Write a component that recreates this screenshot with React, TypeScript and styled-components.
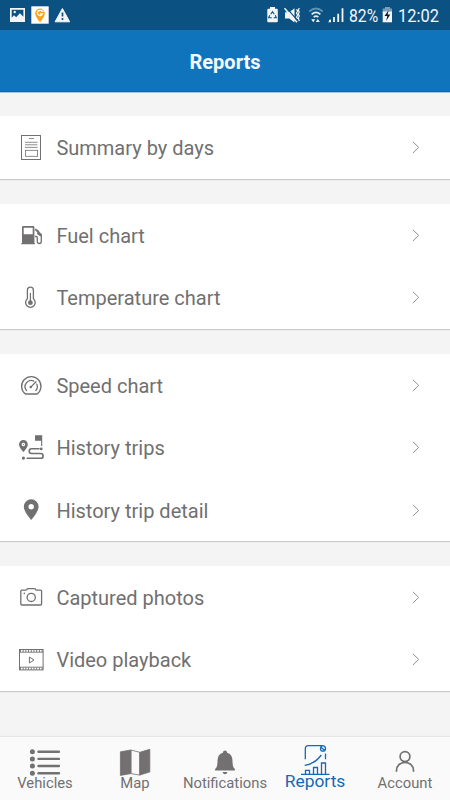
import React from "react";
import styled, { createGlobalStyle } from "styled-components";

const GlobalStyle = createGlobalStyle`
  * { box-sizing: border-box; }
  body { margin: 0; background: #f3f3f3; font-family: Roboto, "Noto Sans", sans-serif; }
`;

const Screen = styled.div`
  display: flex;
  flex-direction: column;
  width: 450px;
  height: 800px;
  background: #f4f4f4;
  overflow: hidden;
`;

const StatusBar = styled.div`
  display: flex;
  justify-content: space-between;
  flex: none;
  height: 30px;
  background: #0b5182;
`;

const StatusGroup = styled.div`
  display: flex;
  color: #f2f6fb;
`;

const StatusText = styled.span<{ $width: number; $scale: number }>`
  display: block;
  width: ${(p) => p.$width}px;
  font-size: 18.7px;
  line-height: 32px;
  white-space: nowrap;
  transform: scaleX(${(p) => p.$scale});
  transform-origin: left center;
`;

const Header = styled.header`
  display: flex;
  align-items: center;
  justify-content: center;
  flex: none;
  height: 63px;
  background: #1074bd;
  border-bottom: 1px solid #a9bedb;
  box-shadow: inset 0 -1px #0c68b3;
`;

const Title = styled.h1`
  margin: 0;
  padding-top: 2px;
  color: #f7faff;
  font-size: 20px;
  font-weight: 700;
  line-height: 24px;
`;

const Content = styled.main`
  display: flex;
  flex-direction: column;
  flex: 1;
  gap: 24px;
  padding-top: 23px;
`;

const Section = styled.section`
  background: #fff;
  border-bottom: 1px solid #cbcbcb;
  box-shadow: 0 1px #ececec;
`;

const Row = styled.div<{ $height: number }>`
  display: flex;
  align-items: flex-start;
  height: ${(p) => p.$height}px;
  padding: 15px 27px 0 15px;
`;

const RowIcon = styled.svg`
  flex: none;
  width: 32px;
  height: 32px;
  color: #727071;
`;

const RowLabel = styled.span`
  flex: 1;
  padding-left: 9.4px;
  color: #707070;
  font-size: 20px;
  line-height: 34px;
`;

const Chevron = styled.svg`
  flex: none;
  width: 12px;
  height: 32px;
`;

const TabBar = styled.nav`
  display: grid;
  grid-template-columns: repeat(5, 90px);
  flex: none;
  height: 63px;
  background: #fafafa;
  box-shadow: 0 -1px 1px #e6e6e6;
`;

const Tab = styled.div<{ $active?: boolean }>`
  display: flex;
  flex-direction: column;
  align-items: center;
  padding-top: 8px;
  color: ${(p) => (p.$active ? "#1469b8" : "#727071")};
`;

const TabIcon = styled.svg`
  flex: none;
  width: 32px;
  height: 31px;
`;

const TabLabel = styled.span<{ $active?: boolean }>`
  font-size: ${(p) => (p.$active ? 17.4 : 14.8)}px;
  line-height: ${(p) => (p.$active ? 11 : 14)}px;
  white-space: nowrap;
`;

const icons: Record<string, React.ReactNode> = {
  summary: (
    <g fill="none" stroke="currentColor">
      <rect x="6.5" y="4.5" width="19" height="24" />
      <path d="M14 7.5h5M10 11.3h12.5M10 13.8h12.5M10 16.4h12.5" strokeWidth="0.8" />
      <rect x="10.4" y="19.3" width="12.2" height="6" strokeWidth="0.8" />
    </g>
  ),
  fuel: (
    <g>
      <path
        fill="currentColor"
        fillRule="evenodd"
        d="M7 24V8.3Q7 7 8.3 7h9.8q1.3 0 1.3 1.3V24h.4v1.3H6.3V24ZM8.7 8.7v6.6h9V8.7Z"
      />
      <path d="m20.2 10.2 3 2.2v2.3l3 2" fill="none" stroke="currentColor" strokeWidth="2" />
      <path d="M20 17.5h1.3q1 0 1 1.2v4.1q0 1.7 1.9 1.7 2.1 0 2.1-2v-7l-4.6-4" fill="none" stroke="currentColor" strokeWidth="1.3" />
    </g>
  ),
  temperature: (
    <g fill="none" stroke="currentColor" strokeWidth="1.3">
      <path d="M12.4 17.8V9.2a3 3 0 0 1 6 0v8.6a4.8 4.8 0 1 1-6 0Z" />
      <path d="M15.4 12v8" strokeWidth="1.2" />
      <circle cx="15.4" cy="21.7" r="2.4" fill="currentColor" stroke="none" />
    </g>
  ),
  speed: (
    <g fill="none" stroke="currentColor" strokeWidth="1.3" strokeLinecap="round">
      <path d="M10.4 25h11.8a9.7 9.7 0 1 0-11.8 0Z" strokeLinejoin="round" />
      <path d="M11.6 21.6a6.1 6.1 0 0 1 7.2-9.5M21.8 15.2a6.1 6.1 0 0 1-1 6.4" />
      <path d="m16.3 17.6 4.7-4.8" />
      <circle cx="15.8" cy="18" r="1.3" fill="currentColor" stroke="none" />
    </g>
  ),
  trips: (
    <g>
      <path
        fill="currentColor"
        fillRule="evenodd"
        d="M8.4 21Q4 16.2 4 13.4a4.4 4.4 0 0 1 8.8 0Q12.8 16.2 8.4 21Zm0-9.3a1.8 1.8 0 1 0 0 3.6 1.8 1.8 0 0 0 0-3.6Z"
      />
      <circle cx="8.4" cy="13.5" r="0.6" fill="currentColor" />
      <path d="M20 4.3h7.2v10.8h-1.1V9.7H20Z" fill="currentColor" />
      <circle cx="26.2" cy="17.9" r="1.4" fill="currentColor" />
      <circle cx="8.4" cy="27.1" r="1.6" fill="currentColor" />
      <path d="M24 17.7h-7.4a2.4 2.4 0 0 0 0 4.8h9.1a2.4 2.4 0 0 1 0 4.8H12.2" fill="none" stroke="currentColor" strokeWidth="1.6" strokeLinecap="round" />
    </g>
  ),
  pin: (
    <path
      fill="currentColor"
      fillRule="evenodd"
      d="M16.2 26Q8.8 17.5 8.8 12.7a7.4 7.4 0 0 1 14.8 0Q23.6 17.5 16.2 26Zm0-16a2.7 2.7 0 1 0 0 5.4 2.7 2.7 0 0 0 0-5.4Z"
    />
  ),
  camera: (
    <g fill="none" stroke="currentColor" strokeWidth="1.3">
      <path d="M6.9 9.2h4q.8 0 1-.8.2-.8 1-.8h6.6q.8 0 1 .8.2.8 1 .8h4q1.1 0 1.1 1.1v12.6q0 1.1-1.1 1.1H6.9q-1.1 0-1.1-1.1V10.3q0-1.1 1.1-1.1Z" />
      <circle cx="16.2" cy="16.4" r="4.1" />
      <circle cx="9.3" cy="12.4" r="0.8" fill="currentColor" stroke="none" />
    </g>
  ),
  video: (
    <g fill="none" stroke="currentColor">
      <rect x="4.5" y="6.5" width="23.6" height="20.4" />
      <path d="M4.5 9.2h23.6M4.5 24.2h23.6" strokeWidth="0.9" />
      <path d="M5 7.8h23M5 25.6h23" strokeWidth="2.2" strokeDasharray="0.9 1.8" />
      <path d="m14.4 14 4.6 3-4.6 3Z" />
    </g>
  ),
};

const sections = [
  [{ icon: "summary", label: "Summary by days", height: 63 }],
  [
    { icon: "fuel", label: "Fuel chart", height: 62 },
    { icon: "temperature", label: "Temperature chart", height: 63 },
  ],
  [
    { icon: "speed", label: "Speed chart", height: 62 },
    { icon: "trips", label: "History trips", height: 63 },
    { icon: "pin", label: "History trip detail", height: 62 },
  ],
  [
    { icon: "camera", label: "Captured photos", height: 62 },
    { icon: "video", label: "Video playback", height: 63 },
  ],
];

const tabs: { label: string; active?: boolean; icon: React.ReactNode }[] = [
  {
    label: "Vehicles",
    icon: (
      <g fill="currentColor">
        {[6.7, 13.9, 21, 28.2].map((y) => (
          <g key={y}>
            <circle cx="3.4" cy={y} r="2.5" />
            <rect x="8.3" y={y - 1.2} width="22.8" height="2.4" rx="1.2" />
          </g>
        ))}
      </g>
    ),
  },
  {
    label: "Map",
    icon: (
      <g stroke="currentColor" strokeWidth="0.8" strokeLinejoin="round">
        <path d="M1.4 6.8 11.9 5v23.6L1.4 30.4ZM20.8 7.3l10-3v22.6l-10 3.2Z" fill="currentColor" />
        <path d="m11.9 5 8.9 2.3v22.8l-8.9-1.5Z" fill="none" />
      </g>
    ),
  },
  {
    label: "Notifications",
    icon: (
      <g fill="currentColor">
        <path d="M16 5.6q2 0 2.1 2.1 5.4 1.6 5.4 8.2 0 6.7 2.4 8v1.5H6.1v-1.5q2.4-1.3 2.4-8 0-6.6 5.4-8.2.1-2.1 2.1-2.1Z" />
        <path d="M13.6 27h4.8q-.5 2.3-2.4 2.3T13.6 27Z" />
      </g>
    ),
  },
  {
    label: "Reports",
    active: true,
    icon: (
      <g fill="none" stroke="currentColor" strokeWidth="1.3">
        <path d="M6.3 14.2V3.7q0-3 3-3h14q3.2 0 3.2 2.9 0 2.6-2.4 2.6-2.8 0-2.6-2.8 0-1.9 1.8-2.7M22 2.2l3.8 3.2M26.5 8.6v5.6" />
        <path d="M5.7 20.4q10-1.4 16.6-10.4" />
        <path d="M2 29.4h28.5M6.5 29v-3.7h4V29M14.5 29v-6.5h4V29M22.5 29V18h4v11" />
      </g>
    ),
  },
  {
    label: "Account",
    icon: (
      <g fill="none" stroke="currentColor" strokeWidth="1.7">
        <circle cx="16" cy="11.6" r="4.9" />
        <path d="M7.5 26.8v-1.4a8.5 8.1 0 0 1 17 0v1.4" />
      </g>
    ),
  },
];

const NoticeIcons = () => (
  <svg width="80" height="30" viewBox="0 0 80 30">
    <path fill="#f2f6fb" fillRule="evenodd" d="M10 8h15v14H10Zm1.7 1.7v8l2.3-2.5 2.2 2 3.7-4 3.5 3.6V9.7Z" />
    <circle cx="14.7" cy="12" r="1.2" fill="#f2f6fb" />
    <rect x="31" y="6" width="18" height="18" fill="#fff" stroke="#174690" strokeWidth="0.6" />
    <path d="M40 22.2q-4.8-5.3-4.8-8.9a4.8 4.8 0 0 1 9.6 0q0 3.6-4.8 8.9Z" fill="#f6a51c" />
    <path d="M42.3 11.6a2.6 2.6 0 1 0 .2 2.2H40" fill="none" stroke="#fff" strokeWidth="1.2" />
    <path d="M42.6 8.6v2.8h2.6" fill="none" stroke="#fff" strokeWidth="0.7" />
    <path d="m62.4 8.5 7.3 13.3H55.1Z" fill="#f2f6fb" stroke="#f2f6fb" strokeLinejoin="round" />
    <path d="M62.5 12.4v4.2M62.5 18.1v1.8" stroke="#0b5182" strokeWidth="1.7" />
  </svg>
);

const SignalIcons = () => (
  <svg width="86" height="30" viewBox="263 0 86 30">
    <path d="M270 7h5v1.7h1.8q1 0 1 1v11.6q0 1-1 1h-8.5q-1 0-1-1V9.7q0-1 1-1h1.7Z" fill="#f2f6fb" />
    <path d="m270.7 14.2 1.8-2.6 1.8 2.6M275.3 15.3l1 2.5h-2.7M271.8 17.8h-3.2l1.2-2.5" fill="none" stroke="#0b5182" strokeWidth="1.1" />
    <path d="M285 12.2h4.3l5.2-4v14.4l-5.2-4H285Z" fill="#f2f6fb" />
    <path d="m286 7.4 11 12.4" stroke="#0b5182" strokeWidth="1.2" />
    <path d="m284.5 8.2 12.5 14" stroke="#f2f6fb" strokeWidth="1.5" />
    <path d="m296.5 9.3 1.2 1.8-1.2 2 1.2 2-1.2 2 1.2 1.8M299.3 8l-1 2 1 2-1 2 1 2-1 2 1 3" fill="none" stroke="#f2f6fb" strokeWidth="1.2" />
    <path d="M309.3 11.5q6.7-6 13.4 0" fill="none" stroke="#5f91b5" strokeWidth="1.7" />
    <path d="M311.6 14.4q4.4-4 8.8 0M313.7 17.2q2.3-2 4.6 0" fill="none" stroke="#e2edf6" strokeWidth="1.6" />
    <path d="m311.2 19.2 2 3.1 2-3.1ZM315.8 22h4l-2-3Z" fill="#f2f6fb" />
    <path d="M330 22v-2.2M334 22v-5M338.2 22v-8.3M342.5 22V8.2" stroke="#f2f6fb" strokeWidth="1.8" />
    <path d="M328 22.2h3v-3Z" fill="#f2f6fb" />
  </svg>
);

const BatteryIcon = () => (
  <svg width="17" height="30" viewBox="381 0 17 30">
    <path d="M385 7h5v1.6h2V13h-9.3V8.6h2.3Z" fill="#7d9db8" />
    <path d="M382.7 11.5h9.3v10.8h-9.3Z" fill="#f2f6fb" />
    <path d="m388.7 10-4.2 6.1h2.8l-1.2 5 4.2-6.5h-2.7Z" fill="#111c28" />
  </svg>
);

export default function App() {
  return (
    <>
      <GlobalStyle />
      <Screen>
        <StatusBar>
          <NoticeIcons />
          <StatusGroup>
            <SignalIcons />
            <StatusText $width={32} $scale={0.84}>82%</StatusText>
            <BatteryIcon />
            <StatusText $width={52} $scale={0.88}>12:02</StatusText>
          </StatusGroup>
        </StatusBar>
        <Header>
          <Title>Reports</Title>
        </Header>
        <Content>
          {sections.map((rows) => (
            <Section key={rows[0].label}>
              {rows.map((row) => (
                <Row key={row.label} $height={row.height}>
                  <RowIcon viewBox="0 0 32 32">{icons[row.icon]}</RowIcon>
                  <RowLabel>{row.label}</RowLabel>
                  <Chevron viewBox="0 0 12 32">
                    <path d="m1.9 10.8 5.8 5.6-5.8 5.6" fill="none" stroke="#929292" strokeWidth="1" />
                  </Chevron>
                </Row>
              ))}
            </Section>
          ))}
        </Content>
        <TabBar>
          {tabs.map((tab) => (
            <Tab key={tab.label} $active={tab.active}>
              <TabIcon viewBox="0 0 32 31">{tab.icon}</TabIcon>
              <TabLabel $active={tab.active}>{tab.label}</TabLabel>
            </Tab>
          ))}
        </TabBar>
      </Screen>
    </>
  );
}
